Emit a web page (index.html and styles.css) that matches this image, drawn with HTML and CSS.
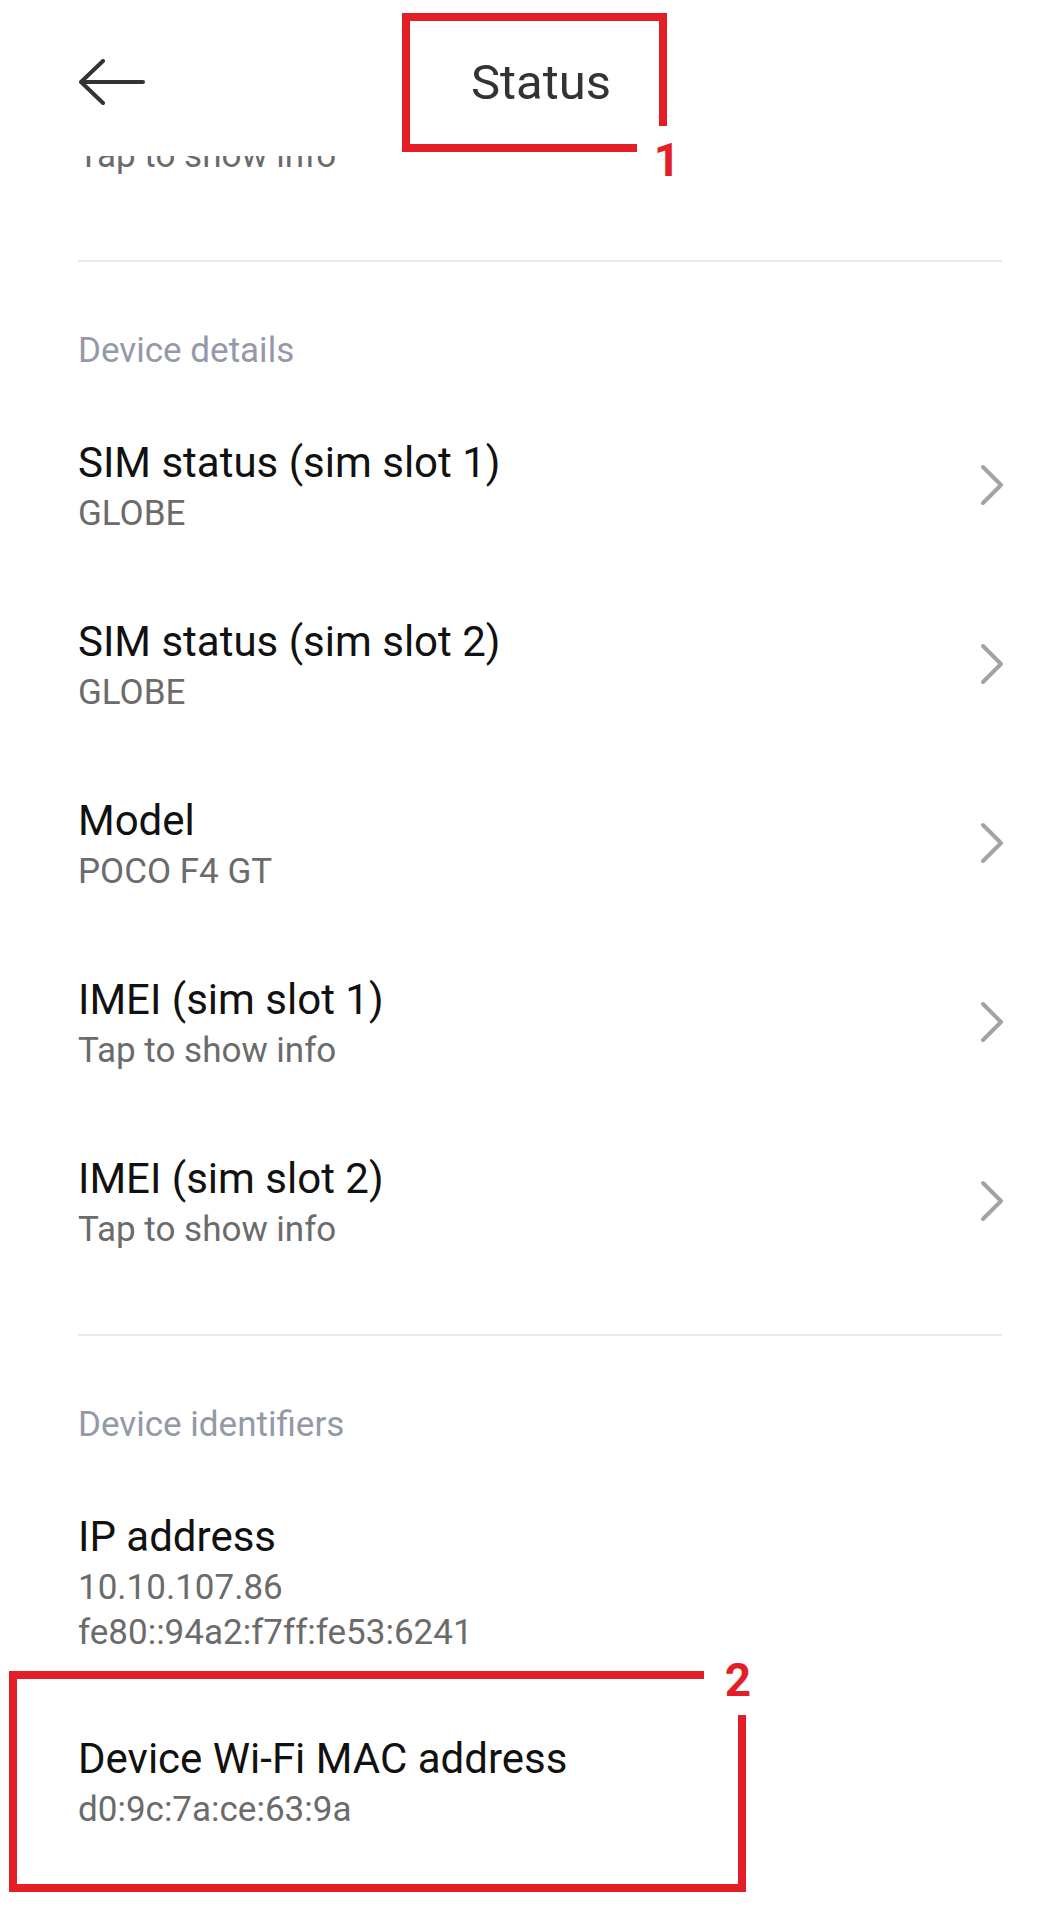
FILE: index.html
```html
<!DOCTYPE html>
<html lang="en">
  <head>
    <meta charset="UTF-8" />
    <meta name="viewport" content="width=device-width, initial-scale=1.0" />
    <title>Status</title>
    <link rel="stylesheet" href="styles.css">
  </head>
  <body>
    <div class="screen">
      <header class="appbar">
        <svg class="back" width="66" height="46" viewBox="0 0 66 46">
          <path d="M24 2 L2 23 L24 44 M2 23 H64" />
        </svg>
        <h1 class="appbar-title">Status</h1>
      </header>

      <main class="list">
        <div class="row row-peek">
          <div class="row-text">
            <div class="row-title">&nbsp;</div>
            <div class="row-sub">Tap to show info</div>
          </div>
        </div>

        <hr class="divider" />
        <div class="section-label">Device details</div>

        <div class="row">
          <div class="row-text">
            <div class="row-title">SIM status (sim slot 1)</div>
            <div class="row-sub">GLOBE</div>
          </div>
          <svg class="chevron" width="24" height="42" viewBox="0 0 24 42"><path d="M3 3 L21 21 L3 39" /></svg>
        </div>
        <div class="row">
          <div class="row-text">
            <div class="row-title">SIM status (sim slot 2)</div>
            <div class="row-sub">GLOBE</div>
          </div>
          <svg class="chevron" width="24" height="42" viewBox="0 0 24 42"><path d="M3 3 L21 21 L3 39" /></svg>
        </div>
        <div class="row">
          <div class="row-text">
            <div class="row-title">Model</div>
            <div class="row-sub">POCO F4 GT</div>
          </div>
          <svg class="chevron" width="24" height="42" viewBox="0 0 24 42"><path d="M3 3 L21 21 L3 39" /></svg>
        </div>
        <div class="row">
          <div class="row-text">
            <div class="row-title">IMEI (sim slot 1)</div>
            <div class="row-sub">Tap to show info</div>
          </div>
          <svg class="chevron" width="24" height="42" viewBox="0 0 24 42"><path d="M3 3 L21 21 L3 39" /></svg>
        </div>
        <div class="row">
          <div class="row-text">
            <div class="row-title">IMEI (sim slot 2)</div>
            <div class="row-sub">Tap to show info</div>
          </div>
          <svg class="chevron" width="24" height="42" viewBox="0 0 24 42"><path d="M3 3 L21 21 L3 39" /></svg>
        </div>

        <hr class="divider" />
        <div class="section-label">Device identifiers</div>

        <div class="row row-multi">
          <div class="row-text">
            <div class="row-title">IP address</div>
            <div class="row-sub">10.10.107.86</div>
            <div class="row-sub">fe80::94a2:f7ff:fe53:6241</div>
          </div>
        </div>
        <div class="row">
          <div class="row-text">
            <div class="row-title">Device Wi-Fi MAC address</div>
            <div class="row-sub">d0:9c:7a:ce:63:9a</div>
          </div>
        </div>
      </main>

      <!-- annotation boxes -->
      <div class="mark mark-1"></div>
      <div class="mark-tag tag-1">1</div>
      <div class="mark mark-2"></div>
      <div class="mark-tag tag-2">2</div>
    </div>
  </body>
</html>
```

FILE: styles.css
```css
body {
  margin: 0;
  background: #fff;
  font-family: Roboto, "Noto Sans", sans-serif;
}
.screen {
  position: relative;
  width: 1048px;
  height: 1916px;
  overflow: hidden;
  background: #fff;
}

/* top bar, drawn over the scrolled list */
.appbar {
  position: absolute;
  top: 0;
  left: 0;
  right: 0;
  height: 156px;
  box-sizing: border-box;
  padding: 53px 0 0 79px;
  display: flex;
  align-items: flex-start;
  background: #fff;
  z-index: 2;
}
.back {
  margin-top: 6px;
}
.back path {
  fill: none;
  stroke: #333;
  stroke-width: 4;
  stroke-linecap: round;
  stroke-linejoin: round;
}
.appbar-title {
  margin: 0 0 0 326px;
  font-size: 49px;
  line-height: 60px;
  font-weight: 400;
  color: #333;
}

.list {
  padding: 43px 46px 0 78px;
}
.row {
  display: flex;
  align-items: center;
  justify-content: space-between;
  height: 179px;
  box-sizing: border-box;
  padding: 38px 0 39px;
}
.row-multi {
  height: auto;
  padding-bottom: 46px;
}
.row-title {
  font-size: 42px;
  line-height: 48px;
  color: #111;
}
.row-sub {
  font-size: 35px;
  line-height: 54px;
  color: #6b6b6b;
}
.row-sub + .row-sub {
  line-height: 36px;
}
.chevron {
  margin-bottom: 11px;
  margin-right: -2px;
}
.chevron path {
  fill: none;
  stroke: #a3a3a3;
  stroke-width: 4;
  stroke-linecap: round;
  stroke-linejoin: round;
}
.divider {
  margin: 38px 0 0;
  border: 0;
  height: 2px;
  background: #e9e9e9;
}
.section-label {
  margin: 65px 0 26px;
  font-size: 35px;
  line-height: 48px;
  color: #9499a8;
}

/* red annotation boxes */
.mark {
  position: absolute;
  border: 8px solid #e31e26;
  box-sizing: border-box;
  z-index: 3;
}
.mark-1 {
  left: 402px;
  top: 13px;
  width: 265px;
  height: 139px;
}
.mark-2 {
  left: 9px;
  top: 1671px;
  width: 737px;
  height: 221px;
}
.mark-tag {
  position: absolute;
  display: flex;
  align-items: center;
  justify-content: center;
  background: #fff;
  color: #e31e26;
  font-family: Roboto, "Liberation Sans", sans-serif;
  font-weight: 700;
  font-size: 46px;
  z-index: 4;
}
.tag-1 {
  left: 637px;
  top: 126px;
  width: 60px;
  height: 68px;
}
.tag-2 {
  left: 704px;
  top: 1645px;
  width: 68px;
  height: 70px;
}
```
